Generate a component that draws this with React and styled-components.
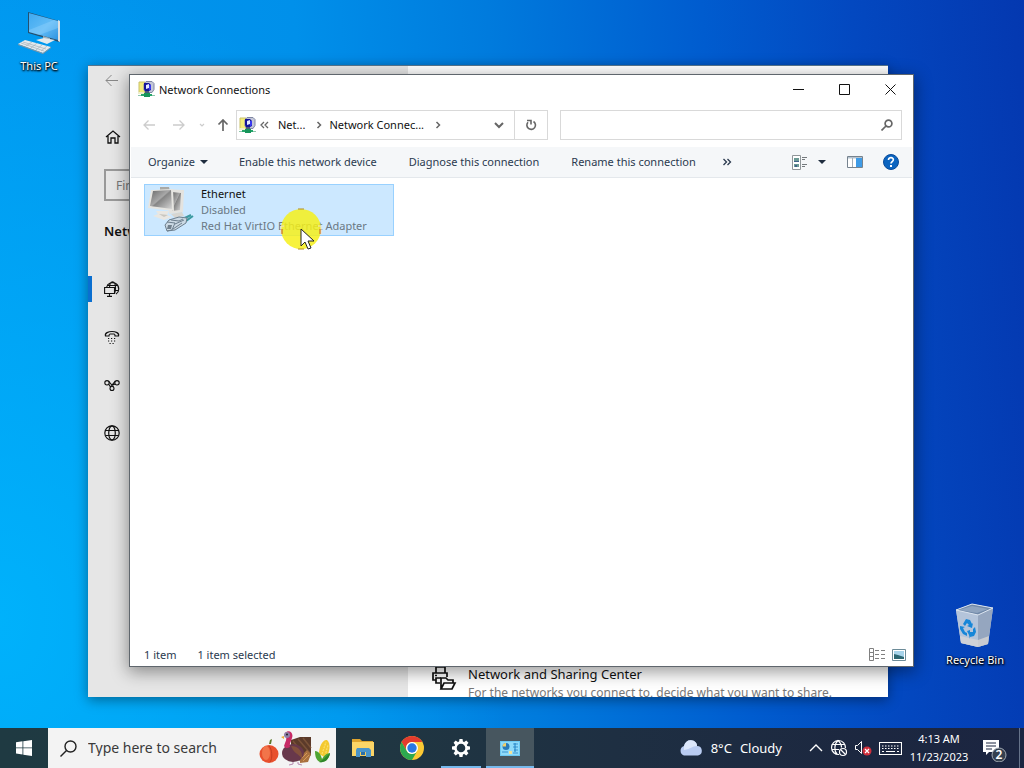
import React from "react"
import styled, { createGlobalStyle } from "styled-components"

const GlobalStyle = createGlobalStyle`
  * {
    box-sizing: border-box;
  }
  body {
    margin: 0;
    overflow: hidden;
    font-family: "Noto Sans", "Open Sans", sans-serif;
    font-size: 11px;
    line-height: 16px;
    color: #111;
  }
  button, input {
    font: inherit;
    color: inherit;
    border: 0;
    padding: 0;
    margin: 0;
    background: none;
  }
  a {
    color: inherit;
    text-decoration: none;
  }
  h1, h2, p, ul {
    margin: 0;
    padding: 0;
    list-style: none;
  }
  svg {
    display: block;
    flex: none;
  }
`

/* ---------- icons ---------- */

const Line = ({ w = 16, h = w, color = "currentColor", sw = 1, children }) => (
  <svg
    width={w}
    height={h}
    viewBox={`0 0 ${w} ${h}`}
    fill="none"
    stroke={color}
    strokeWidth={sw}
    aria-hidden="true"
  >
    {children}
  </svg>
)

const NetIcon = () => (
  <svg width="17" height="17" viewBox="0 0 17 17" aria-hidden="true">
    <path d="M1 1h6v11H1z" fill="#f3ec7a" stroke="#c9c06a" />
    <path d="M8 .5h6l2 2v6l-2 3H8L6 9V3z" fill="#c3c7d8" stroke="#8087a2" />
    <path d="M6 2h5l2 2v5l-2 1H7L6 8z" fill="#14149a" />
    <path d="M8 4l3-1v4l-3 1z" fill="#e4eaff" />
    <path d="M11 4h2v4l-2 2z" fill="#3a3af0" />
    <path d="M0 11h6v2H0z" fill="#eeeecb" />
    <path d="M7 10h4v2H7z" fill="#4b5b7a" />
    <path d="M3 13h11v2H3z" fill="#25a56a" />
    <path d="M6 12h6v4H6z" fill="#16945a" />
    <path d="M0 14h3v1H0zM14 14h3v1h-3z" fill="#8ec5aa" />
  </svg>
)

const ThisPcIcon = () => (
  <svg width="44" height="44" viewBox="0 0 44 44" aria-hidden="true">
    <defs>
      <linearGradient id="pcScreen" x1="0" y1="0" x2="1" y2="1">
        <stop offset="0" stopColor="#3fa9f0" />
        <stop offset=".55" stopColor="#62bcf6" />
        <stop offset="1" stopColor="#2d93e0" />
      </linearGradient>
    </defs>
    <path d="M11 2l31 9v21L11 23z" fill="#24506f" />
    <path d="M41 10l2 1v21l-2-1z" fill="#d9e0e4" />
    <path d="M12 3l29 8v19l-29-8z" fill="url(#pcScreen)" />
    <path d="M12 20l25-10 4 1v7L22 25l-10-3z" fill="#9bd8ff" opacity=".35" />
    <path d="M26 26l7 2v3h-7z" fill="#9fb2bd" />
    <path d="M19 30l8-2 11 2-8 4z" fill="#e3e9ec" />
    <path d="M1 34l7-4 26 7-8 6z" fill="#e4e9ed" />
    <path d="M1 34l25 9 8-6v1l-8 6L1 35z" fill="#8897a1" />
    <path d="M6 32l23 7M4 33l23 8M9 36l6-4M14 38l6-5M19 40l6-5M24 41l6-5" stroke="#a5b1ba" strokeWidth=".7" />
  </svg>
)

const RecycleIcon = () => (
  <svg width="42" height="46" viewBox="0 0 42 46" aria-hidden="true">
    <path d="M2 8l16-6 21 4-5 36-10 3-17-4z" fill="#b8c7dc" />
    <path d="M2 8l16-6 21 4-15 7z" fill="#7189a9" />
    <path d="M5 8l13-4 16 3-11 4z" fill="#8fa4bf" />
    <path d="M24 13l15-7-5 36-10 3z" fill="#95a6bf" />
    <path d="M2 8l22 5v32L7 41z" fill="#b4c4da" />
    <path d="M6 34l18 4v7L7 41zM24 38l11-4-1 8-10 3z" fill="#d4d4d6" opacity=".8" />
    <path d="M2 8l22 5 15-7M2 8l16-6 21 4" fill="none" stroke="#dbe4ef" />
    <g fill="#1686d8">
      <path d="M9 22l3-5 4 1 2 4 1-1-1 5-5-2 2-1-2-2-2 3z" />
      <path d="M6 24l5 1-2 1 2 4 2 1v3l-4-2-3-5z" />
      <path d="M15 33l-2-4 3-1v2l3 0 0-3 2-2 1 5-2 4-4 1v2z" />
    </g>
  </svg>
)

const EthernetIcon = () => (
  <svg width="50" height="48" viewBox="0 0 50 48" aria-hidden="true">
    <defs>
      <linearGradient id="crt" x1="0" y1="0" x2="1" y2="1">
        <stop offset="0" stopColor="#686868" />
        <stop offset=".45" stopColor="#a8a8a8" />
        <stop offset=".5" stopColor="#858585" />
        <stop offset="1" stopColor="#d6d6d6" />
      </linearGradient>
    </defs>
    <path d="M20 3l18 1-1 22-14 2z" fill="#e4e3df" />
    <path d="M26 6l9 1-1 17-8 1z" fill="url(#crt)" />
    <path d="M14 1h9l1 4H14z" fill="#a9a9a6" />
    <path d="M5 4l22-1 1 22-26-3z" fill="#e6e5e1" />
    <path d="M7 5l18-1 1 19-22-3z" fill="url(#crt)" />
    <path d="M10 25h13l-2 4 5 2-8 3-11-4 5-2z" fill="#e9e7e2" />
    <path d="M13 28l9 1-4 2z" fill="#c9c7c0" />
    <path d="M25 28l11-2 2 4-9 2z" fill="#d7d6d1" />
    <path d="M30 33l14-4-2 6-9 5z" fill="#a9cbdb" />
    <path d="M39 32l6-3M40 35l7-5" stroke="#3b9aa0" strokeWidth="2" />
    <path d="M19 39l4-5 10-3 8 1-1 5-11 7-8 1z" fill="#cbd9e4" stroke="#6d7f8e" />
    <path d="M21 36l8 1-3 7-5 1M29 38l9-4M27 43l9-6M25 34l8 1 4-2" fill="none" stroke="#6d7f8e" />
    <path d="M22 39h4l-1 4h-4z" fill="#71808d" />
  </svg>
)

const PointerMark = () => (
  <svg width="42" height="44" viewBox="0 0 42 44" aria-hidden="true">
    <circle cx="21" cy="21" r="20" fill="#f5ef18" opacity=".84" />
    <path d="M18 1h6M18 41h6" stroke="#b58b1b" />
    <path d="M4 18h-3v8M38 18h3v8" fill="none" stroke="#f6e3c4" />
    <path d="M2 21v5M40 21v5" stroke="#c4561f" />
    <path d="M21 21v17l4-4 3 7 3-1-3-7h6z" fill="#fff" stroke="#222" />
  </svg>
)

const BackIcon = () => (
  <Line w={14}>
    <path d="M13 6.500H1M6.500 1L1 6.500 6.500 12" />
  </Line>
)

const HomeIcon = () => (
  <Line w={16} sw={1.3}>
    <path d="M1 8l7-6 7 6M3 7v7h3V9h4v5h3V7" />
  </Line>
)

/* globe with a small monitor in front of its lower left */
const StatusNavIcon = () => (
  <Line w={16} sw={1.1}>
    <path d="M2.500 6.500a6.200 6.200 0 1 1 9.500 6.500M5.500 6.500C5.700 3 7 .8 8.500.8c1.700 0 3 2.700 3 6.200 0 2.200-.3 4-1 5.500M3 4.500h11.300M11 9.500h3.500" />
    <path d="M.6 6.500h9.900v6H.6z" fill="#e6e6e6" />
    <path d="M5.500 12.500v2.500M3 15.400h5" />
  </Line>
)

const DialIcon = () => (
  <Line w={16} sw={1.2}>
    <path d="M1.500 7c-1-3 3-4.500 6.500-4.500s7.500 1.500 6.500 4.500h-3.500c0-1.200-.5-2-1-2h-4c-.5 0-1 .8-1 2z" />
    <path d="M4 9.500h8M4 12h8M5.500 14.500h5" strokeDasharray="1.200 1.800" />
  </Line>
)

const VpnIcon = () => (
  <Line w={16} sw={1.1}>
    <circle cx="3" cy="5.800" r="2.200" />
    <circle cx="13" cy="5.800" r="2.200" />
    <circle cx="8" cy="11.500" r="2" />
    <path d="M4.500 4.200L9.500 10M4.700 7.300L6.500 10M6.500 9.800l4.800-5.600M9 8l2-1" />
  </Line>
)

const GlobeIcon = () => (
  <Line w={16} sw={1.2}>
    <circle cx="8" cy="8" r="7.200" />
    <ellipse cx="8" cy="8" rx="3.300" ry="7.200" />
    <path d="M1.500 5.500h13M1.500 10.500h13" />
  </Line>
)

const SharingIcon = () => (
  <Line w={26} sw={1.7}>
    <path d="M5 8V2h9v6M5 15H2V8h14v4" />
    <path d="M9 18H5v-5h5M4 10.500h2" />
    <path d="M10 24V13h5l2 2h5v3M10 24l3-6h11l-3 6z" />
  </Line>
)

const Chevron = () => (
  <Line w={10} sw={1.5}>
    <path d="M3.500 2l3 3-3 3" />
  </Line>
)

/* ---------- desktop ---------- */

const Page = styled.div`
  height: 100vh;
  display: flex;
  flex-direction: column;
`

const Desktop = styled.main`
  position: relative;
  flex: 1;
  min-height: 0;
  overflow: hidden;
  background:
    radial-gradient(ellipse 50% 90% at 0% 85%, rgba(0, 186, 255, 0.75), rgba(0, 186, 255, 0)),
    linear-gradient(86deg, #0098f0 0%, #0090ea 32%, #007bdd 50%, #005ccf 70%, #0348c0 84%, #0438b0 100%);
`

const Shortcut = styled.button`
  position: absolute;
  width: 76px;
  display: flex;
  flex-direction: column;
  align-items: center;
  gap: 4px;
  color: #fff;
  text-shadow: 0 1px 2px #000, 1px 1px 2px #000, 0 0 2px rgba(0, 0, 0, 0.7);
  ${({ $corner }) => ($corner === "bottom" ? "right: 11px; bottom: 60px;" : "left: 1px; top: 10px;")}
`

/* ---------- settings window ---------- */

const SettingsWindow = styled.section`
  position: absolute;
  inset: 65px 136px 31px 88px;
  display: flex;
  overflow: hidden;
  background: #fff;
  border-top: 1px solid #56748c;
  box-shadow: 0 3px 12px rgba(0, 0, 0, 0.4);
`

const Sidebar = styled.nav`
  flex: 0 0 320px;
  background: #e6e6e6;
  color: #111;
  .back {
    display: flex;
    align-items: center;
    height: 30px;
    padding-left: 17px;
    color: #888;
  }
  h1 {
    margin: 18px 16px 22px;
    font-size: 13px;
    line-height: 24px;
    font-weight: 600;
  }
`

const HomeLink = styled.a`
  display: flex;
  align-items: center;
  height: 48px;
  margin-top: 17px;
  padding-left: 17px;
`

const FindBox = styled.input`
  display: block;
  width: 288px;
  height: 32px;
  margin: 8px 16px 0;
  padding: 0 10px;
  border: 2px solid #999;
  font-size: 12px;
  &::placeholder {
    color: #777;
    opacity: 1;
  }
`

const SideLink = styled.a`
  display: flex;
  align-items: center;
  height: 48px;
  padding-left: 12px;
  border-left: 4px solid transparent;
  border-image: ${({ $active }) =>
    $active ? "linear-gradient(transparent 25%, #0a6fd0 25%, #0a6fd0 75%, transparent 75%) 1" : "none"};
`

const SettingsBody = styled.div`
  flex: 1;
  display: flex;
  flex-direction: column;
  justify-content: flex-end;
`

const SharingLink = styled.a`
  display: flex;
  align-items: flex-start;
  gap: 11px;
  margin-bottom: -6px;
  padding-left: 23px;
  white-space: nowrap;
  strong {
    display: block;
    font-size: 13px;
    font-weight: 400;
    line-height: 18px;
  }
  span {
    display: block;
    font-size: 12px;
    line-height: 20px;
    color: #777;
  }
`

/* ---------- explorer window ---------- */

const ExplorerWindow = styled.section`
  position: absolute;
  inset: 74px 110px 61px 129px;
  display: flex;
  flex-direction: column;
  background: #fff;
  border: 1px solid #5f666d;
  box-shadow: 0 4px 16px 1px rgba(0, 0, 0, 0.4);
`

const TitleBar = styled.header`
  display: flex;
  align-items: center;
  gap: 4px;
  height: 29px;
  padding-left: 8px;
  h2 {
    flex: 1;
    font-size: 11px;
    font-weight: 400;
  }
`

const CaptionButtons = styled.div`
  display: flex;
  button {
    width: 46px;
    height: 29px;
    display: grid;
    place-items: center;
  }
`

const NavRow = styled.div`
  display: flex;
  align-items: flex-start;
  height: 43px;
  padding: 6px 11px 0 4px;
`

const NavButton = styled.button`
  width: ${({ $w }) => $w}px;
  height: 30px;
  display: grid;
  place-items: center;
  color: ${({ $on }) => ($on ? "#666" : "#ccc")};
`

const AddressBar = styled.div`
  flex: 308;
  min-width: 0;
  display: flex;
  align-items: center;
  height: 30px;
  padding-left: 2px;
  border: 1px solid #d9d9d9;
  white-space: nowrap;
  color: #666;
  button {
    display: flex;
    align-items: center;
  }
  .crumb {
    color: #111;
  }
  .more {
    margin: 0 8px 0 4px;
  }
  .gap {
    margin: 0 5px 0 9px;
  }
  .last {
    margin: 0 auto 0 9px;
  }
  .drop {
    padding: 0 10px 0 8px;
  }
  .refresh {
    width: 33px;
    height: 28px;
    justify-content: center;
    border-left: 1px solid #d9d9d9;
  }
`

const SearchField = styled.label`
  flex: 324;
  min-width: 0;
  display: flex;
  align-items: center;
  height: 30px;
  margin-left: 12px;
  padding: 0 8px;
  border: 1px solid #d9d9d9;
  color: #666;
  input {
    flex: 1;
    min-width: 0;
    outline: none;
  }
`

const CommandBar = styled.div`
  display: flex;
  align-items: center;
  height: 31px;
  margin: 0 1px;
  padding: 0 13px 0 17px;
  background: #f5f7f9;
  border-bottom: 1px solid #e4e8ec;
  color: #2b3a4f;
  white-space: nowrap;
`

const Command = styled.button`
  display: flex;
  align-items: center;
  gap: 5px;
  margin-right: ${({ $after = 32 }) => $after}px;
`

const Spacer = styled.div`
  flex: 1;
`

const FileArea = styled.ul`
  flex: 1;
  padding: 6px 14px;
`

const Adapter = styled.button`
  display: flex;
  width: 250px;
  height: 52px;
  padding: 1px;
  border: 1px solid #99d1ff;
  background: #cce8ff;
  text-align: left;
  white-space: nowrap;
  span {
    display: block;
    color: #6a7884;
  }
  .name {
    color: #111;
  }
  .text {
    margin-left: 5px;
  }
`

const StatusBar = styled.footer`
  display: flex;
  align-items: center;
  gap: 21px;
  height: 23px;
  padding: 0 7px 0 14px;
  color: #2b3a4f;
  .views {
    display: flex;
    gap: 6px;
    margin-left: auto;
  }
`

const Pointer = styled.div`
  position: absolute;
  left: 280px;
  top: 208px;
  pointer-events: none;
`

/* ---------- taskbar ---------- */

const Taskbar = styled.footer`
  display: flex;
  height: 40px;
  color: #fff;
  white-space: nowrap;
  background: linear-gradient(90deg, #1f3a42 0%, #203742 35%, #1e2f42 60%, #1c2740 85%, #1b2541 100%);
`

const TaskButton = styled.button`
  width: 48px;
  height: 40px;
  display: grid;
  place-items: center;
  background: ${({ $active }) => ($active ? "#47565f" : "none")};
  border-bottom: 2px solid ${({ $active }) => ($active ? "#76b9ed" : "transparent")};
  border-top: 2px solid transparent;
`

const OpenButton = styled(TaskButton)`
  width: 40px;
  margin: 0 4px;
  border-bottom-color: #76b9ed;
`

const Pinned = styled.div`
  display: flex;
  gap: 1px;
  margin-left: 3px;
`

const TaskSearch = styled.label`
  width: 288px;
  display: flex;
  align-items: center;
  padding: 0 5px 0 12px;
  background: #f3f3f3;
  color: #222;
  input {
    flex: 1;
    min-width: 0;
    margin-left: 11px;
    font-size: 14px;
    outline: none;
  }
  input::placeholder {
    color: #3a3a3a;
    opacity: 1;
  }
`

const Tray = styled.div`
  display: flex;
  align-items: center;
  margin-left: auto;
  button {
    display: flex;
    align-items: center;
    height: 40px;
  }
  .weather {
    gap: 8px;
    margin-right: 27px;
    font-size: 13px;
  }
  .clock {
    width: 74px;
    justify-content: center;
    line-height: 18px;
  }
  .notes {
    margin: 0 11px 0 6px;
  }
  .show {
    width: 5px;
    border-left: 1px solid #66738a;
  }
`

const TrayIcons = styled.div`
  display: flex;
  gap: 7px;
`

const Harvest = () => (
  <svg width="72" height="36" viewBox="0 0 72 36" aria-hidden="true">
    <path d="M10 14l1-4 2-1-1 5z" fill="#5d7a2a" />
    <ellipse cx="10" cy="24" rx="9.500" ry="9" fill="#e8502d" />
    <ellipse cx="7" cy="23" rx="4" ry="7" fill="#f2744a" />
    <path d="M10 16c3 3 4 12 1 16" fill="none" stroke="#c63d20" />
    <path d="M32 10l9-3h11v18l-6 6-14-1z" fill="#5b3a2a" />
    <path d="M39 9l12 14M44 8l8 10M34 11l14 18" stroke="#7a5238" strokeWidth="1.500" />
    <path d="M41 27l7-7 4 4-3 8-8 1z" fill="#a9713f" />
    <path d="M42 29l6-6M44 31l6-6" stroke="#d79a57" />
    <ellipse cx="34" cy="23" rx="11" ry="9" fill="#68384b" />
    <path d="M32 16c8 0 12 6 11 13-4-6-8-5-11-13z" fill="#83503c" />
    <path d="M26 3c4-4 9 0 7 5-1 4-3 6-2 9-3 2-5 1-6-1 1-4 3-6 2-9z" fill="#c72b66" />
    <circle cx="28" cy="5" r="3" fill="#8e7ea8" />
    <circle cx="28" cy="4.500" r="1" fill="#222" />
    <path d="M25 6l-3 1 3 2z" fill="#edaa38" />
    <path d="M34 32v2l-4 1M39 32v2l4 1" fill="none" stroke="#b78ab0" />
    <path d="M60 24c0-8 4-15 8-14 4 3 3 12-1 18z" fill="#f4c92f" />
    <path d="M63 24l4-12M66 26l3-11" stroke="#fae16c" strokeWidth="1.200" strokeDasharray="2 1" />
    <path d="M56 21c4 0 6 4 7 8 2-4 5-6 8-6-1 7-6 10-10 9-4-2-5-6-5-11z" fill="#4fa533" />
    <path d="M60 32c3-1 7-5 11-9-1 7-6 10-11 9z" fill="#2d8429" />
  </svg>
)

const ChromeIcon = () => (
  <svg width="24" height="24" viewBox="0 0 24 24" aria-hidden="true">
    <circle cx="12" cy="12" r="12" fill="#fcc934" />
    <path d="M1.610 6A12 12 0 0 1 22.390 6H12a6 6 0 0 0-5.200 9z" fill="#e33b2e" />
    <path d="M1.610 6A12 12 0 0 0 12 24l5.200-9A6 6 0 0 1 6.800 15z" fill="#2da94f" />
    <circle cx="12" cy="12" r="6" fill="#fff" />
    <circle cx="12" cy="12" r="4.700" fill="#2a78e4" />
  </svg>
)

const GearIcon = () => (
  <svg width="20" height="20" viewBox="-10 -10 20 20" aria-hidden="true">
    {[0, 45, 90, 135, 180, 225, 270, 315].map((a) => (
      <path key={a} d="M-2-6l.5-3h3l.5 3z" fill="#fff" transform={`rotate(${a})`} />
    ))}
    <circle r="5.500" fill="none" stroke="#fff" strokeWidth="2.400" />
  </svg>
)

const Settings = () => (
  <SettingsWindow aria-label="Settings">
    <Sidebar>
      <button className="back" aria-label="Back">
        <BackIcon />
      </button>
      <HomeLink href="#home" aria-label="Home">
        <HomeIcon />
      </HomeLink>
      <FindBox aria-label="Find a setting" placeholder="Find a setting" />
      <h1>Network &amp; Internet</h1>
      <SideLink href="#status" aria-label="Status" $active>
        <StatusNavIcon />
      </SideLink>
      <SideLink href="#dialup" aria-label="Dial-up">
        <DialIcon />
      </SideLink>
      <SideLink href="#vpn" aria-label="VPN">
        <VpnIcon />
      </SideLink>
      <SideLink href="#proxy" aria-label="Proxy">
        <GlobeIcon />
      </SideLink>
    </Sidebar>
    <SettingsBody>
      <SharingLink href="#sharing">
        <SharingIcon />
        <div>
          <strong>Network and Sharing Center</strong>
          <span>For the networks you connect to, decide what you want to share.</span>
        </div>
      </SharingLink>
    </SettingsBody>
  </SettingsWindow>
)

const Explorer = () => (
  <ExplorerWindow aria-label="Network Connections">
    <TitleBar>
      <NetIcon />
      <h2>Network Connections</h2>
      <CaptionButtons>
        <button aria-label="Minimize">
          <Line w={11}>
            <path d="M0 5.500h11" />
          </Line>
        </button>
        <button aria-label="Maximize">
          <Line w={11}>
            <path d="M.5.500h10v10H.5z" />
          </Line>
        </button>
        <button aria-label="Close">
          <Line w={11}>
            <path d="M.5.500l10 10M10.500.5l-10 10" />
          </Line>
        </button>
      </CaptionButtons>
    </TitleBar>
    <NavRow>
      <NavButton $w={30} aria-label="Back">
        <Line w={12} sw={1.3}>
          <path d="M12 6H1M5.500 1.500L1 6l4.500 4.500" />
        </Line>
      </NavButton>
      <NavButton $w={30} aria-label="Forward">
        <Line w={12} sw={1.3}>
          <path d="M0 6h11M6.500 1.500L11 6l-4.500 4.500" />
        </Line>
      </NavButton>
      <NavButton $w={16} aria-label="Recent locations">
        <Line w={6} sw={1.2}>
          <path d="M1 2l2 2 2-2" />
        </Line>
      </NavButton>
      <NavButton $w={26} $on aria-label="Up">
        <Line w={12} sw={1.7}>
          <path d="M6 12V1M1.500 5.500L6 1l4.500 4.500" />
        </Line>
      </NavButton>
      <AddressBar>
        <NetIcon />
        <button className="more" aria-label="Previous folders">
          <Line w={10} sw={1.3}>
            <path d="M4 2L1 5l3 3M8 2L5 5l3 3" />
          </Line>
        </button>
        <button className="crumb">Net...</button>
        <button className="gap" aria-label="Expand Network">
          <Chevron />
        </button>
        <button className="crumb">Network Connec...</button>
        <button className="last" aria-label="Expand Network Connections">
          <Chevron />
        </button>
        <button className="drop" aria-label="Show history">
          <Line w={10} sw={2}>
            <path d="M1 3l4 4 4-4" />
          </Line>
        </button>
        <button className="refresh" aria-label="Refresh">
          <Line w={12} sw={1.6}>
            <path d="M8.500 2.500A4.300 4.300 0 1 1 3 3.200" />
            <path d="M2 1.500h4v4" />
          </Line>
        </button>
      </AddressBar>
      <SearchField>
        <input type="text" aria-label="Search Network Connections" />
        <Line w={12} sw={1.7}>
          <circle cx="7.500" cy="4.500" r="3.400" />
          <path d="M5 7L.5 11.500" />
        </Line>
      </SearchField>
    </NavRow>
    <CommandBar>
      <Command $after={31}>
        Organize
        <svg width="8" height="4" viewBox="0 0 8 4" aria-hidden="true">
          <path d="M0 0h8L4 4z" fill="#1f2d3f" />
        </svg>
      </Command>
      <Command>Enable this network device</Command>
      <Command>Diagnose this connection</Command>
      <Command $after={26}>Rename this connection</Command>
      <Command aria-label="More commands">
        <Line w={10} sw={1.3}>
          <path d="M1.500 2l3 3-3 3M5.500 2l3 3-3 3" />
        </Line>
      </Command>
      <Spacer />
      <Command $after={21} aria-label="Change your view">
        <svg width="16" height="15" viewBox="0 0 16 15" aria-hidden="true">
          <path d="M.5.500h8v14h-8z" fill="#fff" stroke="#909699" />
          <path d="M2 3h5v3H2zM2 9h5v3H2z" fill="#6b9a94" />
          <path d="M2 6h5v1H2zM3 10h2v2H3z" fill="#41608a" />
          <path d="M10 2.500h5M10 4.500h3M10 9.500h5M10 11.500h3" stroke="#74797d" />
        </svg>
        <svg width="13" height="4" viewBox="0 0 13 4" aria-hidden="true">
          <path d="M5 0h8L9 4z" fill="#1f2d3f" />
        </svg>
      </Command>
      <Command $after={20} aria-label="Show the preview pane">
        <svg width="16" height="12" viewBox="0 0 16 12" aria-hidden="true">
          <path d="M.5.500h15v11H.5z" fill="#fff" stroke="#76838f" />
          <path d="M1 1h14v1.500H1z" fill="#b7c4d0" />
          <path d="M9 2h6v9H9z" fill="#3f9be6" />
          <path d="M5.500 2v9" stroke="#a4afb8" />
        </svg>
      </Command>
      <Command $after={0} aria-label="Help">
        <svg width="16" height="16" viewBox="0 0 16 16" aria-hidden="true">
          <circle cx="8" cy="8" r="7.500" fill="#0b64c0" stroke="#0a4b99" />
          <path d="M5.500 6c0-3.500 5.200-3 4.800 0-.2 1.500-2.300 1.700-2.300 3.500" fill="none" stroke="#fff" strokeWidth="1.700" />
          <path d="M7 11h2v2H7z" fill="#fff" />
        </svg>
      </Command>
    </CommandBar>
    <FileArea>
      <li>
        <Adapter>
          <EthernetIcon />
          <span className="text">
            <span className="name">Ethernet</span>
            <span>Disabled</span>
            <span>Red Hat VirtIO Ethernet Adapter</span>
          </span>
        </Adapter>
      </li>
    </FileArea>
    <StatusBar>
      <span>1 item</span>
      <span>1 item selected</span>
      <div className="views">
        <button aria-label="Details view">
          <Line w={17} h={13} color="#808080">
            <path d="M.5.500h4v12h-4zM.5 4.500h4M.5 8.500h4" />
            <path d="M6 2.500h11M6 6.500h11M6 10.500h11" strokeDasharray="4 2" />
          </Line>
        </button>
        <button aria-label="Large icons view">
          <svg width="14" height="12" viewBox="0 0 14 12" aria-hidden="true">
            <path d="M.5.500h13v11H.5z" fill="#fff" stroke="#6c8b98" />
            <path d="M2 2h10v8H2z" fill="#a6d3ea" />
            <path d="M2 5l4 1 6 2v2H2z" fill="#2b6672" />
          </svg>
        </button>
      </div>
    </StatusBar>
  </ExplorerWindow>
)

const App = () => {
  return (
    <Page>
      <GlobalStyle />
      <Desktop>
        <Shortcut>
          <ThisPcIcon />
          This PC
        </Shortcut>
        <Shortcut $corner="bottom">
          <RecycleIcon />
          Recycle Bin
        </Shortcut>
        <Settings />
        <Explorer />
        <Pointer>
          <PointerMark />
        </Pointer>
      </Desktop>
      <Taskbar>
        <TaskButton aria-label="Start">
          <svg width="16" height="16" viewBox="0 0 16 16" fill="#fff" aria-hidden="true">
            <path d="M0 2.200l6.500-.9v6.200H0zM7.300 1.200L16 0v7.500H7.300zM0 8.300h6.500v6.200L0 13.600zM7.300 8.300H16V16l-8.700-1.200z" />
          </svg>
        </TaskButton>
        <TaskSearch>
          <Line w={17} sw={1.4}>
            <circle cx="10.500" cy="6.500" r="5.500" />
            <path d="M6.500 10.500L.5 16.500" />
          </Line>
          <input type="text" placeholder="Type here to search" aria-label="Type here to search" />
          <Harvest />
        </TaskSearch>
        <Pinned>
          <TaskButton aria-label="File Explorer">
            <svg width="22" height="18" viewBox="0 0 22 18" aria-hidden="true">
              <path d="M0 0h8l2 2h11v4H0z" fill="#dfa52e" />
              <path d="M0 3h22v14H0z" fill="#fbd567" />
              <path d="M5 9h12l2 2v7h-5v-5H8v5H4v-7z" fill="#4a94c9" />
              <path d="M8 13h6v4H8z" fill="#f3cc60" />
              <path d="M9 13h4v3H9z" fill="#2c6fa5" />
            </svg>
          </TaskButton>
          <TaskButton aria-label="Google Chrome">
            <ChromeIcon />
          </TaskButton>
          <OpenButton aria-label="Settings">
            <GearIcon />
          </OpenButton>
          <TaskButton $active aria-label="Network Connections">
            <svg width="20" height="15" viewBox="0 0 20 15" aria-hidden="true">
              <path d="M0 0h20v15H0z" fill="#6cc9f3" />
              <path d="M1 1h18v13H1z" fill="#8edbfb" />
              <circle cx="6" cy="5.500" r="3.500" fill="#2a7ab8" />
              <path d="M6 5.500V2a3.500 3.500 0 0 0-3.500 3.500z" fill="#f2d06b" />
              <path d="M13 3h5M13 6h5M14 9h4M13 12h5M2 11h6" stroke="#3b95d0" />
              <path d="M15 2v9" stroke="#1d7fc4" />
              <path d="M9 10h3v3H9z" fill="#f2e39b" />
            </svg>
          </TaskButton>
        </Pinned>
        <Tray>
          <button className="weather">
            <svg width="24" height="16" viewBox="0 0 24 16" aria-hidden="true">
              <path d="M5 15.500a5 5 0 0 1 0-9.500C6 2 9 0 12 .3c4 .2 6 3 6 5.700a4.800 4.800 0 0 1 1 9.500z" fill="#b9ccf2" />
              <path d="M5 6C6 2 9 0 12 .3c4 .2 6 3 6 5.700-5 0-6 3-13 4z" fill="#dce7fb" />
            </svg>
            <span>8°C</span>
            <span>Cloudy</span>
          </button>
          <TrayIcons>
            <button aria-label="Show hidden icons">
              <Line w={14} sw={1.4}>
                <path d="M1 10l6-6 6 6" />
              </Line>
            </button>
            <button aria-label="Network: no connection">
              <Line w={18} sw={1.2}>
                <path d="M9 15.500A7 7 0 1 1 15.500 9M7 15c-3-3-3-10 1-13.500C11 4 11.500 6 11.500 8.500M1.500 5.500h13M1.500 10.500H9" />
                <circle cx="13" cy="13" r="3.500" />
                <path d="M10.500 10.500l5 5" />
              </Line>
            </button>
            <button aria-label="Volume: muted">
              <svg width="17" height="16" viewBox="0 0 17 16" aria-hidden="true">
                <path d="M.5 5.500h2l4-4v12l-4-4h-2z" fill="none" stroke="#fff" />
                <circle cx="12" cy="11" r="4.500" fill="#d02f3c" />
                <path d="M10 9l4 4M14 9l-4 4" stroke="#fff" strokeWidth="1.200" />
              </svg>
            </button>
            <button aria-label="Touch keyboard">
              <Line w={23} h={13} sw={1.1}>
                <path d="M.5.500h22v12H.5z" />
                <path d="M3 4h17M3 6.500h17" strokeDasharray="1.500 1.500" />
                <path d="M3 9.500h2M7 9.500h9M18 9.500h2" />
              </Line>
            </button>
          </TrayIcons>
          <button className="clock">
            <span>
              4:13 AM
              <br />
              11/23/2023
            </span>
          </button>
          <button className="notes" aria-label="2 new notifications">
            <svg width="26" height="28" viewBox="0 0 26 28" aria-hidden="true">
              <path d="M1 6h16v12H7l-3 3v-3H1z" fill="#fff" />
              <path d="M4 9h10M4 12h10M4 15h6" stroke="#1c2740" />
              <circle cx="17" cy="21" r="7" fill="#35404f" stroke="#a4abb4" />
              <text x="17" y="25" textAnchor="middle" fontSize="12" fontWeight="600" fill="#fff">
                2
              </text>
            </svg>
          </button>
          <button className="show" aria-label="Show desktop" />
        </Tray>
      </Taskbar>
    </Page>
  )
}

export default App
